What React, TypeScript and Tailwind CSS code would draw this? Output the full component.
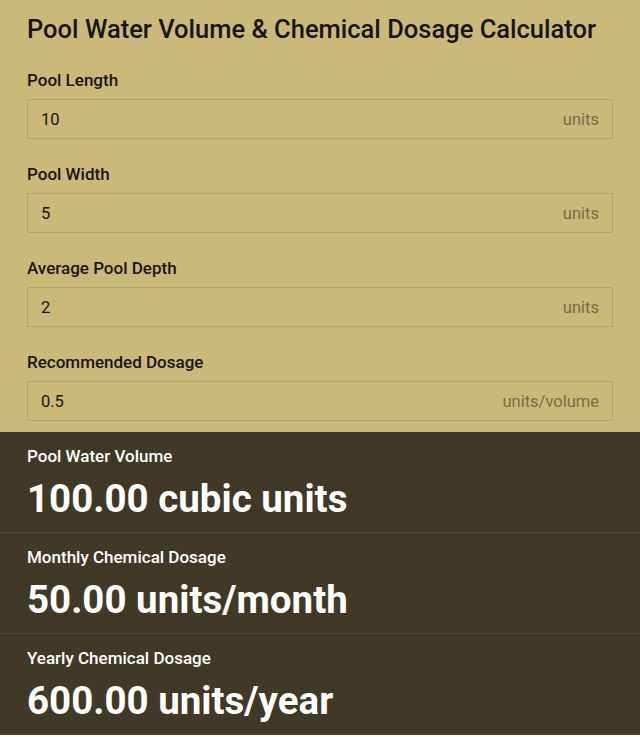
import { useState } from 'react'

const FIELDS = [
  { key: 'length', label: 'Pool Length', unit: 'units' },
  { key: 'width', label: 'Pool Width', unit: 'units' },
  { key: 'depth', label: 'Average Pool Depth', unit: 'units' },
  { key: 'dosage', label: 'Recommended Dosage', unit: 'units/volume' },
] as const

type Key = (typeof FIELDS)[number]['key']

export default function App() {
  const [values, setValues] = useState<Record<Key, string>>({
    length: '10',
    width: '5',
    depth: '2',
    dosage: '0.5',
  })

  const num = (k: Key) => parseFloat(values[k]) || 0
  const volume = num('length') * num('width') * num('depth')
  const monthly = volume * num('dosage')
  const yearly = monthly * 12

  const results = [
    { label: 'Pool Water Volume', value: `${volume.toFixed(2)} cubic units` },
    { label: 'Monthly Chemical Dosage', value: `${monthly.toFixed(2)} units/month` },
    { label: 'Yearly Chemical Dosage', value: `${yearly.toFixed(2)} units/year` },
  ]

  return (
    <div className="font-['Roboto',sans-serif] bg-white">
      {/* Inputs */}
      <div className="bg-[#cbb97b] px-[27px] pt-[13px] pb-[11px] text-[#161616]">
        <h1 className="text-[25.5px] leading-8 font-medium">
          Pool Water Volume &amp; Chemical Dosage Calculator
        </h1>
        <div className="mt-[23px] flex flex-col gap-[23px]">
          {FIELDS.map((f) => (
            <label key={f.key} className="flex flex-col">
              <span className="text-[17px] leading-6 font-medium mb-[7px]">{f.label}</span>
              <div className="flex h-10 items-center border border-[#b6a46c] px-[13px] pt-[3px]">
                <input
                  value={values[f.key]}
                  onChange={(e) => setValues({ ...values, [f.key]: e.target.value })}
                  className="flex-1 min-w-0 bg-transparent text-[16.5px] outline-none text-[#161616]"
                />
                <span className="text-[16.5px] text-[#7a6b45]">{f.unit}</span>
              </div>
            </label>
          ))}
        </div>
      </div>

      {/* Results */}
      <div className="bg-[#403928] text-white">
        {results.map((r) => (
          <div key={r.label} className="border-b border-[#4f4835] px-[27px] pt-[12px] pb-[13px]">
            <div className="text-[17px] leading-6 font-medium">{r.label}</div>
            <div className="mt-[11px] text-[38.5px] leading-[40px] font-bold">{r.value}</div>
          </div>
        ))}
      </div>
    </div>
  )
}
